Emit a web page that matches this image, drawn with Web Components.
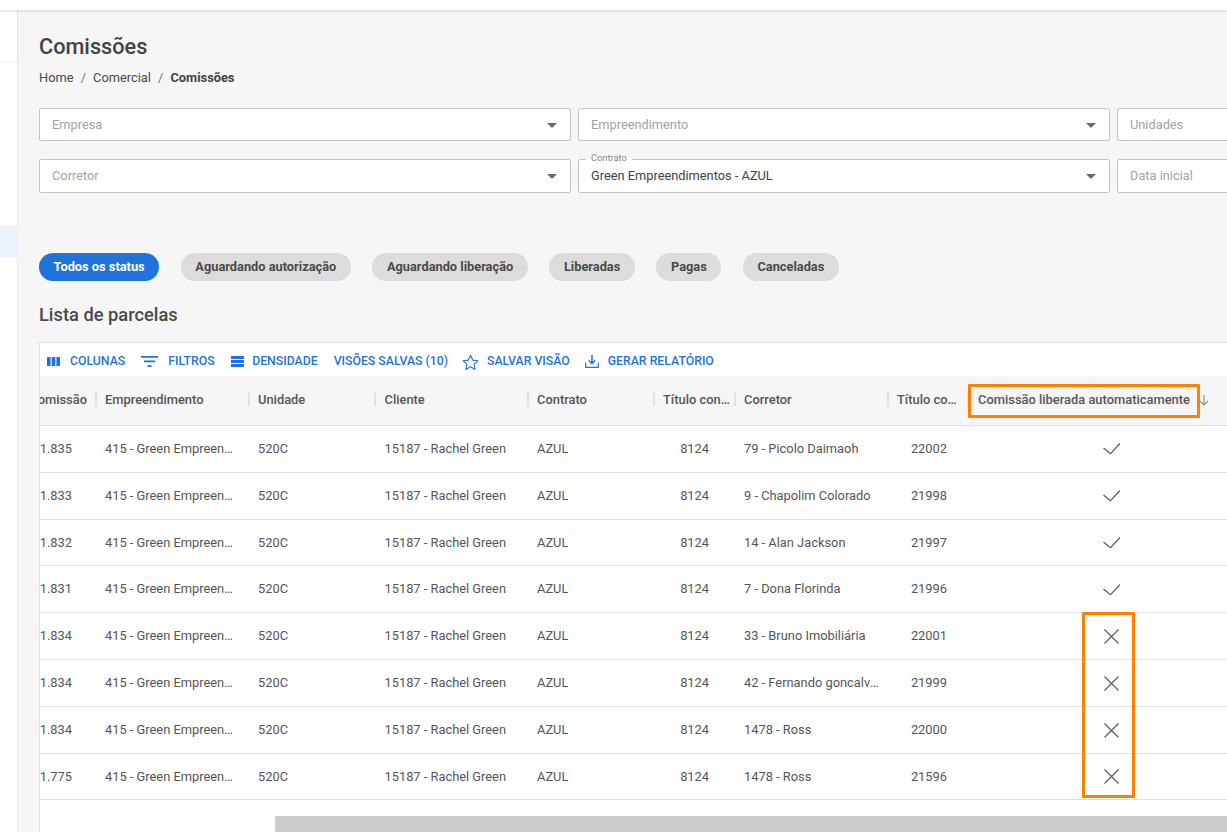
<!DOCTYPE html>
<html lang="pt-BR">
<head>
<meta charset="utf-8">
<title>Comissões</title>
<style>
html,body{margin:0;padding:0;height:100%;overflow:hidden;background:#fff;font-family:Roboto,"Liberation Sans",sans-serif;}
</style>
</head>
<body>
<app-shell>
  <app-sidebar slot="side"></app-sidebar>
  <page-heading title-text="Comissões"></page-heading>
  <filter-grid>
    <filter-field label="Empresa" select></filter-field>
    <filter-field label="Empreendimento" select></filter-field>
    <filter-field label="Unidades"></filter-field>
    <filter-field label="Corretor" select></filter-field>
    <filter-field label="Contrato" value="Green Empreendimentos - AZUL" select></filter-field>
    <filter-field label="Data inicial"></filter-field>
  </filter-grid>
  <chip-row>
    <status-chip active>Todos os status</status-chip>
    <status-chip>Aguardando autorização</status-chip>
    <status-chip>Aguardando liberação</status-chip>
    <status-chip>Liberadas</status-chip>
    <status-chip>Pagas</status-chip>
    <status-chip>Canceladas</status-chip>
  </chip-row>
  <section-title>Lista de parcelas</section-title>
  <data-card>
    <data-toolbar></data-toolbar>
    <commission-table></commission-table>
  </data-card>
</app-shell>
<script>
function def(name, css, html){
  customElements.define(name, class extends HTMLElement{
    constructor(){super();const r=this.attachShadow({mode:'open'});
      r.innerHTML='<style>'+css+'</style>'+(typeof html==='function'?html(this):html);}
  });
}
def('app-shell',`
  :host{display:flex;flex-direction:column;width:1227px;height:832px;overflow:hidden;background:#fff;}
  .top{height:10px;flex:none;background:#fff;box-shadow:0 1px 3px rgba(0,0,0,.14);position:relative;z-index:2}
  .body{flex:1;display:flex;min-height:0}
  main{flex:1;min-width:0;background:#f6f6f6;padding:0 0 0 21px;display:flex;flex-direction:column;overflow:hidden}
`,`<div class="top"></div><div class="body"><slot name="side"></slot><main><slot></slot></main></div>`);
def('app-sidebar',`
  :host{display:flex;flex-direction:column;flex:none;width:18px;background:#fff;box-shadow:inset -1px 0 0 #ececec;position:relative}
  .a{height:51px;background:#fff;box-shadow:0 1px 2px rgba(0,0,0,.08);margin-right:1px}
  .b{height:32px;margin-top:165px;background:#edf3fb;margin-right:1px}
`,`<div class="a"></div><div class="b"></div>`);
def('page-heading',`
  :host{display:block;color:#424242;padding-top:23px}
  h1{margin:0;font:500 21.7px/28px Roboto,sans-serif;color:#424242}
  nav{margin-top:8px;font:400 12.8px/18px Roboto,sans-serif;display:flex;gap:7.2px;color:#4a4a4a}
  b{font-weight:700;color:#424242}
  i{font-style:normal;color:#777}
`,h=>`<h1>${h.getAttribute('title-text')}</h1><nav><span>Home</span><i>/</i><span>Comercial</span><i>/</i><b>Comissões</b></nav>`);
def('filter-grid',`
  :host{display:grid;grid-template-columns:532px 532px 532px;column-gap:7px;grid-template-rows:33px 34px;row-gap:18px;margin-top:21px;}
`,`<slot></slot>`);
def('filter-field',`
  :host{display:block;position:relative;box-sizing:border-box;background:#fff;border:1px solid #c4c4c4;border-radius:2px;font:400 12.8px/1 Roboto,sans-serif;color:#a3a3a3}
  .in{display:flex;align-items:center;height:100%;box-sizing:border-box;padding:2px 13px 0 12px;}
  :host(:nth-child(n+4)) .in{padding-top:0}
  .v{flex:1;color:#a3a3a3}
  .v.f{color:#424242}
  svg{flex:none}
  .lab{position:absolute;left:7px;top:-7px;padding:0 5px;background:linear-gradient(#f6f6f6 50%,#fff 50%);font-size:9.3px;line-height:10px;color:#8a8a8a}
`,h=>{const v=h.getAttribute('value');return `${v?`<span class="lab">${h.getAttribute('label')}</span>`:''}<div class="in"><span class="v ${v?'f':''}">${v||h.getAttribute('label')}</span>${h.hasAttribute('select')?'<svg width="10" height="5" viewBox="0 0 10 5"><path d="M0 0h10L5 5z" fill="#6b6b6b"/></svg>':''}</div>`});
def('chip-row',`:host{display:flex;gap:21.5px;margin-top:60px}`,`<slot></slot>`);
def('status-chip',`
  :host{display:flex;align-items:center;height:28px;box-sizing:border-box;padding:0 14.6px;border-radius:14px;background:#dcdcdc;color:#4a4a4a;font:700 12.8px/1 Roboto,sans-serif;}
  :host([active]){background:#1f73da;color:#fff}
`,`<slot></slot>`);
def('section-title',`:host{display:block;margin-top:22px;font:500 18.3px/24px Roboto,sans-serif;color:#4a4a4a}`,`<slot></slot>`);
def('data-card',`
  :host{display:flex;flex-direction:column;flex:1;min-height:0;margin-top:15px;background:#fff;border-left:1px solid #e0e0e0;border-top:1px solid #e0e0e0;overflow:hidden}
`,`<slot></slot>`);
const ico={
 cols:'<svg width="13" height="9" viewBox="0 0 13 9"><path d="M0 0h3.6v9H0zM4.7 0h3.6v9H4.7zM9.4 0H13v9H9.4z" fill="#1f73da"/></svg>',
 filt:'<svg width="17" height="11" viewBox="0 0 17 11"><path d="M0 0h17v1.7H0zM3 4.6h11v1.7H3zM6.5 9.2h4v1.7h-4z" fill="#1f73da"/></svg>',
 dens:'<svg width="13" height="11" viewBox="0 0 13 11"><path d="M0 0h13v3H0zM0 4h13v3H0zM0 8h13v3H0z" fill="#1f73da"/></svg>',
 star:'<svg width="17" height="16" viewBox="0 0 17 16"><path d="M8.5 1.2l2.2 4.9 5.3.6-4 3.6 1.1 5.2-4.6-2.7-4.6 2.7 1.1-5.2-4-3.6 5.3-.6z" fill="none" stroke="#1f73da" stroke-width="1.1" stroke-linejoin="round"/></svg>',
 down:'<svg width="14" height="13" viewBox="0 0 14 13"><path d="M7 0v8.5M3.8 5.5L7 8.7l3.2-3.2" fill="none" stroke="#1f73da" stroke-width="1.5"/><path d="M.7 7.5v4.8h12.6V7.5" fill="none" stroke="#1f73da" stroke-width="1.2"/></svg>'
};
def('tool-button',`
  :host{display:flex;align-items:center;font:500 12.27px/1 Roboto,sans-serif;color:#1f73da;white-space:nowrap}
  svg{display:block}
  .i{display:flex;margin-right:var(--g,9px)}
`,h=>{const k=h.getAttribute('icon');return (k?`<span class="i">${ico[k]}</span>`:'')+'<slot></slot>'});
def('data-toolbar',`
  :host{display:flex;align-items:center;height:33px;box-sizing:border-box;padding-top:4px;flex:none;padding-left:7px;background:#fff}
  tool-button{margin-right:16px}
`,`<tool-button icon="cols" style="--g:10px">COLUNAS</tool-button>
   <tool-button icon="filt" style="--g:10px;margin-right:16.5px">FILTROS</tool-button>
   <tool-button icon="dens" style="--g:8px">DENSIDADE</tool-button>
   <tool-button style="margin-right:14px">VISÕES SALVAS (10)</tool-button>
   <tool-button icon="star" style="--g:8px;margin-right:15px">SALVAR VISÃO</tool-button>
   <tool-button icon="down" style="--g:9px">GERAR RELATÓRIO</tool-button>`);
const rows=[
 ['1.835','79 - Picolo Daimaoh','22002',1],
 ['1.833','9 - Chapolim Colorado','21998',1],
 ['1.832','14 - Alan Jackson','21997',1],
 ['1.831','7 - Dona Florinda','21996',1],
 ['1.834','33 - Bruno Imobiliária','22001',0],
 ['1.834','42 - Fernando goncalves','21999',0],
 ['1.834','1478 - Ross','22000',0],
 ['1.775','1478 - Ross','21596',0]
];
const ok='<svg width="18" height="12" viewBox="0 0 18 12"><path d="M.5 5l7 5.6L17 .5" fill="none" stroke="#5a5a5a" stroke-width="1.2"/></svg>';
const no='<svg width="15" height="15" viewBox="0 0 15 15"><path d="M.5.5l14 14M14.5.5l-14 14" fill="none" stroke="#606060" stroke-width="1.3"/></svg>';
def('commission-table',`
  :host{display:flex;flex-direction:column;flex:1;min-height:0;position:relative;overflow:hidden;font:400 12.85px/1 Roboto,sans-serif;color:#555}
  .r{display:grid;grid-template-columns:96px 153px 126px 153px 126px 81px 153px 80px 287px;margin-left:-40px;width:1255px;}
  .h{height:49px;background:#f6f6f6;border-bottom:1px solid #e0e0e0;font-weight:500;font-size:12.9px;color:#555;flex:none}
  .d{height:45.8px;border-bottom:1px solid #e0e0e0;flex:none}
  .c{display:flex;align-items:center;min-width:0;padding:0 10px;box-sizing:border-box;position:relative}
  .c span{white-space:nowrap;overflow:hidden;text-overflow:ellipsis;min-width:0}
  .h .c{padding:0 5px 0 9px}
  .h .c:not(:last-child)::after{content:"";position:absolute;right:-1px;top:16px;height:14px;width:2px;background:#e2e2e2}
  .h .c:first-child{justify-content:flex-end;padding-right:9px}
  .h .c:first-child span{flex:none}
  .h .c.n8{padding-right:11px}
  .h .c:last-child{padding-left:10px}
  .d .c{padding-top:1px}
  .d .c:first-child{justify-content:flex-end;padding-right:24px}
  .d .n6{justify-content:flex-end;padding-right:26px}
  .d .n8{justify-content:flex-end;padding-right:21px}
  .d .c:last-child{justify-content:center;padding-left:0;padding-right:0}
  .d .t{padding-left:9px;padding-right:5px}
  .h .c.p10,.d .c.p10{padding-left:9.5px}
  .d .c svg{display:block}
  .arrow{margin-left:9px;flex:none}
  .sb{height:16px;margin:auto 0 0 235px;background:#ccc;flex:none}
  .mark{position:absolute;box-sizing:border-box;border:3px solid #ff7f00;border-radius:1px;pointer-events:none}
`,()=>{
  const head=`<div class="r h">
    <div class="c"><span>Comissão</span></div><div class="c"><span>Empreendimento</span></div><div class="c"><span>Unidade</span></div>
    <div class="c p10"><span>Cliente</span></div><div class="c"><span>Contrato</span></div><div class="c"><span>Título contábil</span></div>
    <div class="c"><span>Corretor</span></div><div class="c n8"><span>Título corretor</span></div>
    <div class="c"><span>Comissão liberada automaticamente</span><svg class="arrow" width="10" height="11" viewBox="0 0 10 11"><path d="M5 0v10M1 6l4 4 4-4" fill="none" stroke="#8a8a8a" stroke-width="1.1"/></svg></div>
  </div>`;
  const body=rows.map(r=>`<div class="r d">
    <div class="c"><span>${r[0]}</span></div><div class="c t"><span style="max-width:129px">415 - Green Empreendimentos</span></div><div class="c t"><span>520C</span></div>
    <div class="c t p10"><span>15187 - Rachel Green</span></div><div class="c t"><span>AZUL</span></div><div class="c n6"><span>8124</span></div>
    <div class="c t"><span style="max-width:138px">${r[1]}</span></div><div class="c n8"><span>${r[2]}</span></div>
    <div class="c">${r[3]?ok:no}</div></div>`).join('');
  return head+body+`<div class="sb"></div>
    <div class="mark" style="left:928px;top:8px;width:232px;height:34px"></div>
    <div class="mark" style="left:1042px;top:236px;width:53px;height:186px"></div>`;
});
</script>
</body>
</html>
